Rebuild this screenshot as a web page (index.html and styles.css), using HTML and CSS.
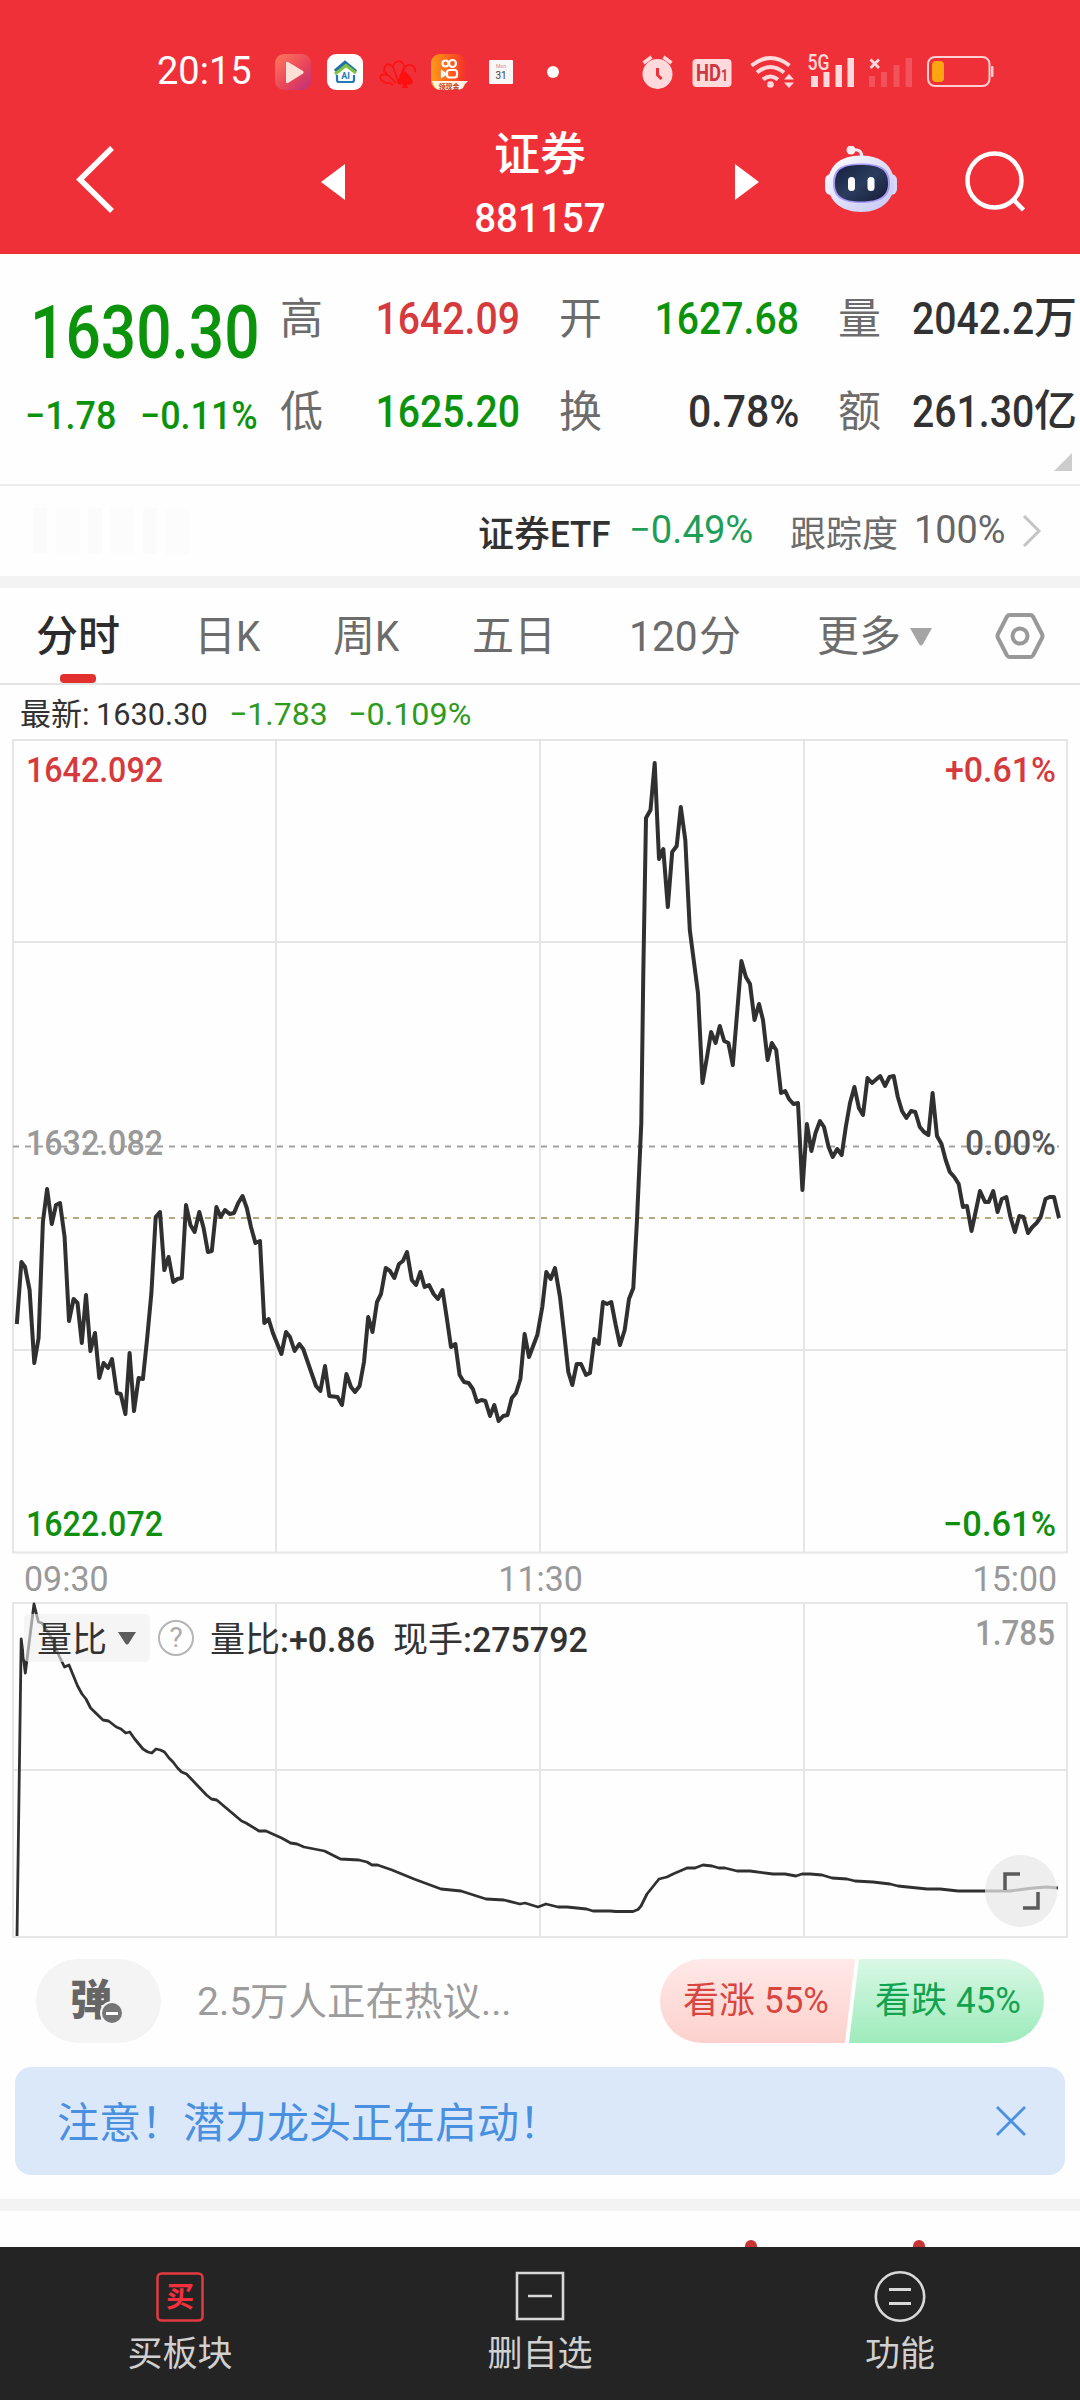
FILE: index.html
```html
<!DOCTYPE html>
<html lang="zh-CN">
<head>
<meta charset="utf-8">
<title>证券 881157</title>
<link rel="stylesheet" href="styles.css">
</head>
<body>
<div class="app">
  <header class="header">
    <div class="status">
      <span class="clock">20:15</span>
      <svg class="notices" viewBox="270 48 300 44" width="300" height="44">
        <defs>
          <linearGradient id="playBg" x1="0" y1="0" x2="1" y2="1"><stop offset="0" stop-color="#ff7a5c"/><stop offset=".6" stop-color="#e8425a"/><stop offset="1" stop-color="#b8307c"/></linearGradient>
          <linearGradient id="ksBg" x1="0" y1="0" x2="1" y2="0"><stop offset="0" stop-color="#ff9a1a"/><stop offset=".6" stop-color="#ff5a1e"/><stop offset="1" stop-color="#f4302e"/></linearGradient>
        </defs>
        <rect x="275" y="53" width="36" height="36" rx="9" fill="url(#playBg)"/>
        <path d="M286 62v19q0 2 2 1l15-9.500q1.500-1.500 0-2.500l-15-9q-2-1-2 1z" fill="#ffe0d6"/>
        <rect x="327" y="53" width="36" height="36" rx="9" fill="#fff"/>
        <path d="M335 70l10-8.500 11 9" fill="none" stroke="#1f6fae" stroke-width="3.500"/>
        <path d="M335 73l11-8.500 10 7.500" fill="none" stroke="#7fc241" stroke-width="3"/>
        <path d="M337 74v5q0 2 2 2h13q2 0 2-2v-5" fill="none" stroke="#2479b5" stroke-width="2.200"/>
        <text x="345.500" y="77.500" font-size="9" font-weight="700" fill="#2479b5" text-anchor="middle">AI</text>
        <g fill="none" stroke="#ff1010" stroke-width="1.600"><path d="M393 84q-4-3-7-2-5-2-6-6 2-4 8-2l8 8-12-12q0-5 4-7 5 1 6 6l4 11-5-14q1-5 6-6 5 1 5 6l-4 10 6-11q5-3 8 1 2 3 1 5"/></g>
        <path d="M405 70q8 8 8 11-1 4-6 2l1 4h-6l1-4q-5 2-6-2 0-3 8-11z" fill="#ff1010"/>
        <rect x="431" y="53" width="35" height="36" rx="9" fill="url(#ksBg)"/>
        <g fill="none" stroke="#fff" stroke-width="2.200"><circle cx="445.500" cy="62.500" r="3"/><circle cx="452.500" cy="62.500" r="3.500"/><rect x="447" y="69" width="10" height="7.500" rx="2.500"/><path d="M442 70.500v5l4-2.500z"/></g>
        <path d="M432 80h36q-4 3-5 7-3 2-6 2h-16q-7 0-9-9z" fill="#fff3e2"/>
        <text x="449" y="87.500" font-size="7" font-weight="700" fill="#c3411e" text-anchor="middle">领现金</text>
        <rect x="489" y="59" width="24" height="24" rx="1" fill="#f7f7f7"/>
        <text x="501" y="66.500" font-size="5" fill="#d88" text-anchor="middle">Mon</text>
        <text x="501" y="77.500" font-size="10" fill="#444" text-anchor="middle">31</text>
        <circle cx="553" cy="71" r="6" fill="#fff"/>
      </svg>
      <svg class="system" viewBox="636 48 364 44" width="364" height="44">
        <circle cx="657.500" cy="73" r="15" fill="#ffd9db"/>
        <path d="M643.500 62l8-6M671.500 62l-8-6" stroke="#ffd9db" stroke-width="3.500"/>
        <path d="M657.500 67v7l4 4" fill="none" stroke="#ef3038" stroke-width="3"/>
        <rect x="692.500" y="58" width="39" height="28" rx="4" fill="#ffd9db"/>
        <text x="696" y="80" class="hd" textLength="32" lengthAdjust="spacingAndGlyphs">HD<tspan class="hd-sub">1</tspan></text>
        <g fill="none" stroke="#ffd9db" stroke-width="4"><path d="M751.500 64.500q19-15 38 0"/><path d="M757 71.500q13.500-11 27 0"/><path d="M763 78.500q7.500-6 15 0"/></g>
        <circle cx="770.500" cy="83.500" r="3.300" fill="#ffd9db"/>
        <path d="M784 78.500l5-5.500 5 5.500zM784 81.500l5 5.500 5-5.500z" fill="#ffd9db"/>
        <text x="807.500" y="69" class="g5" textLength="22" lengthAdjust="spacingAndGlyphs">5G</text>
        <path d="M811 75h7v11h-7zM823.500 71h6v15h-6zM835.500 64h6.500v22h-6.500zM847.500 57h6.500v29h-6.500z" fill="#ffd9db"/>
        <path d="M869 75h6v11h-6zM881 71h6v15h-6zM893.500 64h6v22h-6zM905.500 57h6.500v29h-6.500z" fill="#fff" opacity=".17"/>
        <path d="M870.500 58.500l8.500 8.500M879 58.500l-8.500 8.500" stroke="#ffd9db" stroke-width="2.800"/>
        <rect x="928" y="56" width="61.500" height="29" rx="7" fill="none" stroke="#ffd0d2" stroke-width="2"/>
        <rect x="932" y="60" width="12" height="21" rx="4" fill="#fca510"/>
        <rect x="991" y="65" width="2.500" height="11" rx="1" fill="#ffd0d2"/>
      </svg>
    </div>
    <div class="nav">
      <svg class="back" viewBox="0 0 42 70" width="42" height="70"><path d="M38 4L6 35.500 38 67" fill="none" stroke="#fff" stroke-width="5.500"/></svg>
      <svg class="prev" viewBox="0 0 24 36" width="24" height="36"><path d="M24 0v36L0 18z" fill="#fff"/></svg>
      <div class="title"><div class="name">证券</div><div class="code"><span class="sx">881157</span></div></div>
      <svg class="next" viewBox="0 0 24 36" width="24" height="36"><path d="M0 0v36l24-18z" fill="#fff"/></svg>
      <svg class="robot" viewBox="824 146 74 68" width="74" height="68">
        <defs>
          <linearGradient id="shell" x1="0" y1="0" x2="1" y2="1"><stop offset="0" stop-color="#ffffff"/><stop offset=".5" stop-color="#dfe0fa"/><stop offset="1" stop-color="#c3c6f6"/></linearGradient>
          <linearGradient id="visor" x1="0" y1="0" x2="1" y2="1"><stop offset="0" stop-color="#17203d"/><stop offset=".5" stop-color="#2a3c5e"/><stop offset="1" stop-color="#151c38"/></linearGradient>
        </defs>
        <path d="M852 150q10-2 10 8" fill="none" stroke="#f4e8f2" stroke-width="3"/>
        <circle cx="851" cy="150" r="4.500" fill="#fbeef4"/>
        <rect x="825" y="174" width="14" height="21" rx="6" fill="#eef0ff"/>
        <rect x="883" y="174" width="14" height="21" rx="6" fill="#d4d8fb"/>
        <path d="M861 155.500c22 0 33 12 33 28s-12 28.500-33 28.500-33-12-33-28.500 11-28 33-28z" fill="url(#shell)"/>
        <path d="M861 163.500c21 0 29 6 29 20 0 13-9 19.500-29 19.500s-28-6.500-28-19.500c0-14 7-20 28-20z" fill="#a99af5"/>
        <path d="M861 165c19 0 27 5 27 18.500 0 12-8 18-27 18s-26-6-26-18c0-13.500 7-18.500 26-18.500z" fill="url(#visor)"/>
        <rect x="848" y="177" width="7" height="14" rx="3.500" fill="#fff"/><rect x="867.500" y="177" width="7" height="14" rx="3.500" fill="#fff"/>
      </svg>
      <svg class="search" viewBox="0 0 62 64" width="62" height="64"><circle cx="30.500" cy="30.500" r="27" fill="none" stroke="#fff" stroke-width="4.500"/><path d="M49 49l10.500 11" stroke="#fff" stroke-width="4.500"/></svg>
    </div>
  </header>

  <section class="quote">
    <div class="main down">
      <div class="price"><span class="sx">1630.30</span></div>
      <div class="change"><span class="sx diff">−1.78</span><span class="sx pct">−0.11%</span></div>
    </div>
    <div class="stats">
      <span class="label">高</span><span class="value up"><span class="sx">1642.09</span></span>
      <span class="label">开</span><span class="value down"><span class="sx">1627.68</span></span>
      <span class="label">量</span><span class="value amount"><span class="sx">2042.2</span>万</span>
      <span class="label">低</span><span class="value down"><span class="sx">1625.20</span></span>
      <span class="label">换</span><span class="value wide"><span class="sx">0.78%</span></span>
      <span class="label">额</span><span class="value amount"><span class="sx">261.30</span>亿</span>
    </div>
    <i class="corner"></i>
  </section>

  <section class="etf">
    <span class="ghost"></span>
    <span class="etf-name">证券<span class="sx">ETF</span></span>
    <span class="etf-pct"><span class="sx">−0.49%</span></span>
    <span class="track">跟踪度</span>
    <span class="track-pct"><span class="sx">100%</span></span>
    <svg viewBox="0 0 20 34" width="20" height="34"><path d="M2 2l15 15L2 32" fill="none" stroke="#c4c4c4" stroke-width="3"/></svg>
  </section>

  <nav class="tabs">
    <span class="tab active">分时</span>
    <span class="tab">日<span class="sx">K</span></span>
    <span class="tab">周<span class="sx">K</span></span>
    <span class="tab">五日</span>
    <span class="tab"><span class="sx num">120</span>分</span>
    <span class="tab">更多</span>
    <svg class="drop" viewBox="0 0 24 20" width="24" height="20"><path d="M1 1h22L14 17q-2 3-4 0z" fill="#a5a5a5"/></svg>
    <svg class="gear" viewBox="0 0 50 48" width="50" height="48"><path d="M14.500 3h21q1.500 0 2.500 1.500l9 17.500q1 2 0 4L38 43.500Q37 45 35.500 45h-21q-1.500 0-2.500-1.500L3 26q-1-2 0-4l9-17.500Q13 3 14.500 3z" fill="none" stroke="#999" stroke-width="4"/><circle cx="25" cy="24" r="7.500" fill="none" stroke="#999" stroke-width="4"/></svg>
  </nav>

  <div class="latest">
    <span class="l-name">最新:</span><span class="sx l-price">1630.30</span><span class="sx l-diff">−1.783</span><span class="sx l-pct">−0.109%</span>
  </div>

  <svg class="price-chart" viewBox="0 739 1080 816" width="1080" height="816">
    <g class="grid"><rect x="13" y="740" width="1054" height="812.500"/><path d="M276 740v812M540 740v812M804 740v812M13 942h1054M13 1350h1054"/></g>
    <path d="M13 1146.500h1046" class="dash"/>
    <path d="M13 1218h1046" class="dash tan"/>
    <polyline class="curve" points="16.800,1324 21.400,1262 25,1267 29.600,1290 34.300,1363 38.600,1338 42.900,1222 47.100,1189 51.800,1224 56,1205 60,1203 64.600,1237 69,1321 73.600,1299 77.500,1303 81.800,1343 86,1295 90.400,1351 95,1333 99.300,1378 103.600,1363 108,1368 112,1359 116.800,1393 120.700,1394 125.400,1414 129.600,1353 134,1411 138.600,1378 142.900,1379 147,1340 151.400,1293 155.700,1217 160,1212 164.300,1270 168.600,1257 173.200,1282 177.500,1279 181.800,1278 186,1205 190.400,1225 194.600,1232 199.300,1212 203.600,1228 207.900,1252 211.800,1251 216.400,1207 220.700,1217 225,1210 229.600,1214 234,1213 238.200,1203 242.500,1196 246.800,1208 251,1227 255.400,1243 260,1241 264.300,1323 268.600,1319 272.900,1333 281.400,1354 286,1332 290,1337 294.600,1351 299.300,1344 303.200,1349 316,1386 320.400,1391 325,1366 329.300,1396 337.500,1397 342,1405 346.400,1374 351,1387 355,1392 359.600,1386 364,1362 368.200,1317 372.500,1332 377,1302 381,1294 385.700,1268 390,1271 394.300,1278 399,1264 402.900,1261 407,1252 411.800,1280 416,1285 420.400,1272 424.600,1287 429,1285 433.600,1294 437.900,1299 442.500,1290 446.800,1318 451,1347 455.400,1344 459.600,1375 464,1382 468.600,1383 472.900,1389 477,1402 481.400,1400 485.400,1401 490,1416 494.300,1405 498.600,1421 503.200,1416 507.500,1415 511.800,1398 516,1393 520.400,1379 524.600,1334 529,1357 537.300,1335 542.300,1307 546.300,1272 550.700,1279 555,1268 560,1297 564.300,1335 568.300,1372 572.300,1385 576.700,1364 581,1364 586,1375 590,1373 594.300,1339 598.700,1344 603,1302 607,1304 611.300,1302 615.700,1325 620,1345 624.700,1330 629,1299 633.300,1288 637,1220 641.300,1123 643.300,973 646,818 650.500,810 654.700,763 659,859 663.300,849 667.800,907 672.200,852 676.700,846 680.800,807 685.300,840 689.800,930 698,993 702.500,1083 707,1057 711.100,1032 715.600,1043 719.800,1026 724.200,1041 728.400,1043 732.800,1065 741.400,961 745.900,977 750,984 754.500,1020 759,1004 763,1020 767.600,1060 771.800,1043 776.200,1050 781,1093 785.200,1091 789,1099 793.400,1104 798,1103 802.400,1190 806.900,1124 811.400,1151 815.500,1133 820,1121 824,1127 828.600,1147 832.700,1157 837.200,1149 841.700,1155 845.800,1127 850,1103 854.400,1087 858.900,1108 863,1115 867.500,1078 872,1083 880.200,1076 885,1086 889.500,1077 893.700,1076 897.800,1097 902,1111 906.400,1118 911,1111 915.300,1112 919.800,1127 924,1132 928.400,1135 932.600,1093 937,1136 941.500,1144 945.700,1160 949.800,1172 954.300,1177 958.700,1184 962.900,1207 967,1206 971.500,1231 976,1210 980,1191 985,1202 988.700,1202 993.200,1191 997.600,1212 1001.800,1199 1006.300,1197 1010.400,1217 1014.900,1232 1019.300,1216 1023.500,1217 1028,1233 1032.400,1227 1036.600,1223 1040.700,1217 1045.500,1199 1049.600,1197 1054,1197 1059,1218"/>
    <g class="axis">
      <text x="26" y="782" textLength="137" lengthAdjust="spacingAndGlyphs" fill="#d63a3c">1642.092</text>
      <text x="945" y="782" textLength="111" lengthAdjust="spacingAndGlyphs" fill="#d63a3c">+0.61%</text>
      <text x="26" y="1155" textLength="137" lengthAdjust="spacingAndGlyphs" fill="#999">1632.082</text>
      <text x="965" y="1155" textLength="91" lengthAdjust="spacingAndGlyphs" fill="#555">0.00%</text>
      <text x="26" y="1536" textLength="137" lengthAdjust="spacingAndGlyphs" fill="#0f8f0f">1622.072</text>
      <text x="943" y="1536" textLength="113" lengthAdjust="spacingAndGlyphs" fill="#0f8f0f">−0.61%</text>
    </g>
  </svg>

  <div class="times"><span class="sx">09:30</span><span class="sx">11:30</span><span class="sx">15:00</span></div>

  <div class="volume">
    <svg viewBox="0 1602 1080 337" width="1080" height="337">
      <g class="grid"><rect x="13" y="1603" width="1054" height="334"/><path d="M276 1603v334M540 1603v334M804 1603v334M13 1770h1054"/></g>
      <polyline class="curve thin" points="17,1936 21.200,1639 25.300,1673 34,1604 38.400,1622 42,1623 51,1637 59.600,1657 64.500,1667 69,1665 77.600,1686 82,1694 86,1699 90.600,1708 103,1720 108.600,1721 116.300,1727 121,1729 125.700,1733 129.800,1732 134.700,1739 143,1749 147.800,1752 151.800,1753 156,1749 160.400,1750 164.500,1752 169,1758 173,1762 177.600,1768 181.600,1772 186.500,1774 206.500,1795 211.400,1799 216.700,1800 241.600,1821 246,1823 259,1831 266,1831 281.600,1838 290.600,1843 297,1844 304,1847 324.500,1851 340.400,1859 359,1860 367,1862 372,1865 377.600,1865 392,1870 414,1879 441,1889 461,1891 486,1899 504,1900 520,1904 525,1903 538,1907 546,1904 558,1907 567,1907 586.500,1909 593,1911 610,1911 616,1911.500 633,1911.500 638,1909.500 641,1906 647,1894 659,1879 667,1877 673,1874 687,1868 695,1868 703,1865 712,1866 719,1868 725,1868 737,1871 750,1871 773,1874 785,1874 796,1876 802,1874 810,1874 822,1875 832,1878 847,1879 855,1881 873,1882 890,1884 898,1886 927,1889 940,1889 958,1891 985,1891 1010,1891 1033,1888 1047,1887 1058,1888"/>
      <text class="axis" x="975" y="1645" textLength="80" lengthAdjust="spacingAndGlyphs" fill="#999">1.785</text>
    </svg>
    <div class="indicator">
      <span class="picker"><span class="lift">量比</span><svg viewBox="0 0 20 15" width="20" height="15"><path d="M1 1h18l-7 11q-2 3-4 0z" fill="#5c5c5c"/></svg></span>
      <span class="help">?</span>
      <span class="ratio lift">量比<span class="sx">:+0.86</span></span>
      <span class="hand lift">现手<span class="sx">:275792</span></span>
    </div>
    <span class="expand"><svg viewBox="0 0 72 72" width="72" height="72"><path d="M35 19H20v16M38 53h15V37" fill="none" stroke="#5a5a5a" stroke-width="3.500"/></svg></span>
  </div>

  <section class="talk">
    <span class="danmu"><span class="dan">弹</span><i class="minus"></i></span>
    <span class="hot"><span class="sx">2.5</span>万人正在热议...</span>
    <span class="vote">
      <svg viewBox="0 0 384 84" width="384" height="84">
        <defs>
          <linearGradient id="bull" x1="0" y1="0" x2="0" y2="1"><stop offset="0" stop-color="#ffe9e7"/><stop offset="1" stop-color="#fcd1cd"/></linearGradient>
          <linearGradient id="bear" x1="0" y1="0" x2="0" y2="1"><stop offset="0" stop-color="#d9f8e5"/><stop offset="1" stop-color="#9debbb"/></linearGradient>
        </defs>
        <path d="M42 0h153l-10 84H42a42 42 0 0 1 0-84z" fill="url(#bull)"/>
        <path d="M199 0h143a42 42 0 0 1 0 84H189z" fill="url(#bear)"/>
      </svg>
      <span class="bull">看涨 <span class="sx">55%</span></span><span class="bear">看跌 <span class="sx">45%</span></span>
    </span>
  </section>

  <section class="notice"><span>注意！潜力龙头正在启动！</span><svg viewBox="0 0 32 32" width="32" height="32"><path d="M2 2l28 28M30 2L2 30" stroke="#4a90e0" stroke-width="2.800"/></svg></section>

  <div class="peek"><i></i><i></i></div>

  <footer class="bar">
    <div class="item"><svg viewBox="0 0 52 52" width="52" height="52"><rect x="3.500" y="2.500" width="45" height="47" rx="4" fill="none" stroke="#e23a40" stroke-width="2.500"/><text x="26" y="36" font-size="28" font-weight="700" fill="#f5303e" text-anchor="middle">买</text></svg><span>买板块</span></div>
    <div class="item"><svg viewBox="0 0 52 52" width="52" height="52"><path d="M3 2h46v46H3zM14 25h24" fill="none" stroke="#d8d8d8" stroke-width="2.600"/></svg><span>删自选</span></div>
    <div class="item"><svg viewBox="0 0 52 52" width="52" height="52"><circle cx="26" cy="25.500" r="24.200" fill="none" stroke="#d8d8d8" stroke-width="2.600"/><path d="M15 18.500h22M15 32.500h22" stroke="#d8d8d8" stroke-width="3"/></svg><span>功能</span></div>
  </footer>
</div>
</body>
</html>
```
FILE: styles.css
```css
* { box-sizing: border-box; }
body { margin: 0; background: #fff; }
svg { display: block; flex: none; }
.app {
  width: 1080px; height: 2400px; overflow: hidden;
  display: flex; flex-direction: column;
  font-family: Roboto, "Noto Sans CJK SC", sans-serif;
  color: #323232; white-space: nowrap; background: #fefefe;
}
.app > * { flex: none; }
.up { color: #d63a3c; }
.down { color: #0c930c; }

/* condensed figures */
.sx { display: inline-block; transform: scaleX(.92); transform-origin: 0 50%; }

.header { height: 254px; background: #f03038; color: #fff; }
.status { display: flex; align-items: center; height: 94px; padding: 47px 0 0 157px; }
.clock { width: 113px; font-size: 38px; line-height: 44px; }
.system { margin-left: 66px; }
.hd { font-size: 24px; font-weight: 700; fill: #c93a40; }
.hd-sub { font-size: 16px; }
.g5 { font-size: 22px; font-weight: 500; fill: #ffd9db; }
.nav { display: flex; align-items: flex-start; height: 160px; padding-top: 30px; }
.back { margin: 20px 0 0 74px; }
.prev { margin: 40px 0 0 205px; }
.title { width: 390px; text-align: center; font-weight: 500; }
.name { font-size: 46px; line-height: 60px; }
.code { font-size: 41px; line-height: 60px; margin-top: 4px; }
.code .sx { transform: scaleX(.94); transform-origin: 50% 50%; }
.next { margin-top: 40px; }
.robot { margin: 22px 0 0 65px; }
.search { margin: 26px 0 0 66px; }

.quote { position: relative; display: flex; height: 232px; padding-top: 18px; border-bottom: 2px solid #ececec; }
.main { width: 280px; }
.price { padding-left: 30px; font-size: 75px; font-weight: 500; line-height: 120px; height: 120px; }
.price .sx { transform: scaleX(.83); }
.change { display: flex; font-size: 39px; font-weight: 500; line-height: 48px; }
.change .sx { transform: scaleX(.92); }
.diff { width: 115px; margin-left: 25px; }
.stats { display: grid; grid-template-columns: 42px 198px 82px 197px 82px 1fr; grid-auto-rows: 93px; line-height: 93px; font-size: 43px; width: 800px; }
.label { color: #6c6c6c; text-align: right; margin-top: 1px; }
.value { font-size: 45px; font-weight: 500; text-align: right; }
.value .sx { transform-origin: 100% 50%; transform: scaleX(.87); }
.wide .sx { transform: scaleX(.91); }
.amount { display: flex; padding-left: 31px; font-size: 43px; }
.amount .sx { width: 122px; font-size: 45px; transform-origin: 0 50%; }
.corner { position: absolute; right: 8px; bottom: 13px; border: 9px solid; border-color: transparent #ccc #ccc transparent; }

.etf { display: flex; align-items: center; height: 102px; padding-left: 33px; border-bottom: 12px solid #f3f3f3; font-size: 36px; }
.ghost { width: 164px; height: 46px; margin-right: 281px; background: repeating-linear-gradient(90deg, #fbfbfb 0 14px, #fefefe 14px 22px, #fcfcfc 22px 46px, #fefefe 46px 55px); }
.etf-name { width: 151px; font-weight: 500; }
.etf-name .sx { transform: scaleX(.97); }
.etf-pct { width: 161px; font-size: 39px; color: #1f9e5a; margin-top: -3px; }
.etf-pct .sx { transform: scaleX(.98); }
.track { width: 124px; color: #6c6c6c; }
.track-pct { width: 108px; font-size: 39px; color: #666; margin-top: -3px; }
.track-pct .sx { transform: scaleX(.97); }

.tabs { display: flex; height: 97px; padding-left: 36px; border-bottom: 2px solid #e4e4e4; font-size: 42px; line-height: 98px; color: #6c6c6c; }
.tab { position: relative; width: 158px; height: 95px; }
.tab:nth-child(2) { width: 139px; }
.tab:nth-child(3) { width: 139px; }
.tab:nth-child(4) { width: 157px; }
.tab:nth-child(5) { width: 188px; }
.tab:nth-child(6) { width: 92px; }
.tab .num { width: 70px; transform: scaleX(.97); }
.active { color: #2c2c2c; font-weight: 500; }
.active::after { content: ""; position: absolute; left: 24px; bottom: 0; width: 36px; height: 9px; border-radius: 4px; background: #e2302f; }
.drop { margin-top: 39px; }
.gear { margin: 24px 0 0 62px; }

.latest { display: flex; height: 54px; padding: 1px 0 0 20px; font-size: 31px; line-height: 57px; }
.l-name { width: 76px; }
.latest .sx { font-size: 32px; width: 133px; transform: scaleX(.96); }
.latest .l-diff { width: 119px; transform: scaleX(1); }
.latest .l-pct { transform: scaleX(1.01); }
.l-diff, .l-pct { color: #2f9a1c; }

.grid { fill: none; stroke: #e6e6e6; stroke-width: 2; }
.dash { stroke: #a2a2a2; stroke-width: 2; stroke-dasharray: 6 6; }
.tan { stroke: #b9a77c; }
.curve { fill: none; stroke: #303030; stroke-width: 4; stroke-linejoin: round; }
.thin { stroke-width: 2.8; }
.axis { font-size: 35px; font-weight: 500; }

.times { display: flex; justify-content: space-between; height: 47px; padding: 0 23px 0 24px; font-size: 35px; line-height: 49px; color: #999; }
.times .sx { transform: scaleX(.97); }
.times .sx:nth-child(2) { transform-origin: 50% 50%; }
.times .sx:nth-child(3) { transform-origin: 100% 50%; }

.volume { position: relative; height: 337px; }
.indicator { position: absolute; left: 24px; top: 12px; height: 48px; display: flex; align-items: center; font-size: 35px; }
.picker { display: flex; align-items: center; gap: 10px; width: 126px; height: 48px; padding-left: 13px; background: rgba(238,238,238,.6); border-radius: 5px; }
.lift { margin-top: -4px; }
.help { width: 36px; height: 36px; margin: 0 16px 0 8px; border: 2px solid #b5b5b5; border-radius: 50%; color: #aaa; font-size: 28px; line-height: 32px; text-align: center; }
.ratio { width: 183px; }
.ratio .sx, .hand .sx { transform: scaleX(.97); font-weight: 500; }
.expand { position: absolute; left: 985px; top: 253px; width: 72px; height: 72px; border-radius: 50%; background: rgba(232,232,232,.75); }

.talk { display: flex; height: 128px; padding: 20px 0 0 36px; font-size: 39px; line-height: 86px; }
.danmu { position: relative; width: 125px; height: 84px; border-radius: 42px; background: #f4f4f4; padding-left: 34px; }
.dan { font-size: 42px; font-weight: 900; color: #666; line-height: 80px; }
.minus { position: absolute; left: 64px; top: 42px; width: 24px; height: 24px; border-radius: 50%; border: 2px solid #f4f4f4; background: linear-gradient(#fff, #fff) 50% 50% / 12px 3px no-repeat, #757575; }
.hot { width: 463px; margin-left: 36px; color: #9c9c9c; font-size: 38.5px; }
.hot .sx { width: 53px; font-size: 39px; transform: scaleX(1); }
.vote { position: relative; width: 384px; height: 84px; font-size: 36px; line-height: 84px; }
.bull, .bear { position: absolute; top: 0; left: 23px; color: #d9453f; }
.bear { left: 215px; color: #12a350; }
.vote .sx { transform: scaleX(.97); }

.notice { display: flex; align-items: center; justify-content: space-between; width: 1050px; height: 108px; margin-left: 15px; padding: 0 38px 0 42px; border-radius: 16px; background: #dae8fa; color: #4a90e0; font-size: 42px; }
.notice span { margin-top: -4px; }

.peek { height: 48px; margin-top: 24px; border-top: 12px solid #f3f3f3; display: flex; align-items: flex-end; padding-left: 745px; gap: 156px; overflow: hidden; }
.peek i { width: 12px; height: 12px; margin-bottom: -5px; border-radius: 50%; background: #c93535; }

.bar { display: flex; height: 153px; background: #242424; color: #d0d0d0; font-size: 35px; }
.item { flex: 1; display: flex; flex-direction: column; align-items: center; padding-top: 24px; line-height: 50px; }
.item span { margin-top: 7px; }
```
